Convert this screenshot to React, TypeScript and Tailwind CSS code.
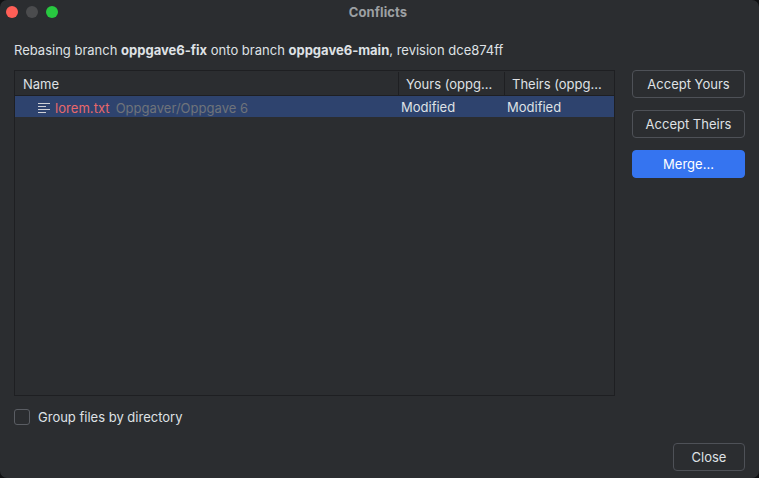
import React from 'react';

function PushButton({ label, primary = false, className = '' }: { label: string; primary?: boolean; className?: string }) {
  return (
    <button
      className={`flex h-7 items-center justify-center rounded-[4px] border ${
        primary ? 'border-[#3574f0] bg-[#3574f0] text-white' : 'border-[#4e5157] text-[#dfe1e5]'
      } ${className}`}
    >
      {label}
    </button>
  );
}

function TextFileIcon() {
  return (
    <svg width="13" height="12" viewBox="0 0 13 12" stroke="#ced0d6" strokeWidth="1" className="shrink-0">
      <path d="M0 1.5H12M0 4.5H8M0 7.5H12M0 10.5H8" />
    </svg>
  );
}

export default function App() {
  return (
    <div className="h-[478px] w-[759px] bg-[#101113]">
      <div className="flex h-full w-full flex-col overflow-hidden rounded-[7px] bg-[#2b2d30] font-['Inter','Liberation_Sans',sans-serif] text-[13px] leading-4 text-[#dfe1e5]">
        <header className="grid h-6 shrink-0 grid-cols-3 items-center">
          <div className="flex gap-2 pl-1.5">
            <span className="size-3 rounded-full bg-[#ff5f57]" />
            <span className="size-3 rounded-full bg-[#4b4c4e]" />
            <span className="size-3 rounded-full bg-[#28c840]" />
          </div>
          <h1 className="pr-[3px] text-center font-bold tracking-[0.1px] text-[#9da0a3]">Conflicts</h1>
        </header>
        <p className="mt-[18px] ml-[14px] whitespace-nowrap">
          Rebasing branch <b>oppgave6-fix</b> onto branch <b>oppgave6-main</b>, revision dce874ff
        </p>
        <main className="mt-3 mr-[14px] ml-[14px] flex justify-between">
          <section className="h-[326px] w-[601px] border border-[#1e1f22]">
            <div className="flex h-[25px] items-center border-b border-[#1e1f22]">
              <div className="w-[383px] pt-px pl-2">Name</div>
              <div className="h-[23px] w-[106px] border-l border-[#1e1f22] pt-1 pl-[7px]">Yours (oppg...</div>
              <div className="h-[23px] grow border-l border-[#1e1f22] pt-1 pl-[7px]">Theirs (oppg...</div>
            </div>
            <div className="flex h-[21px] bg-[#2e436e]">
              <div className="flex w-[386px] items-center pt-[3px] pl-[23px]">
                <TextFileIcon />
                <span className="ml-1 tracking-[0.05px] text-[#e8686a]">lorem.txt</span>
                <span className="ml-1.5 tracking-[0.03px] text-[#6f737a]">Oppgaver/Oppgave 6</span>
              </div>
              <div className="w-[106px] pt-[3px]">Modified</div>
              <div className="pt-[3px]">Modified</div>
            </div>
          </section>
          <aside className="flex w-[113px] flex-col gap-3">
            <PushButton label="Accept Yours" />
            <PushButton label="Accept Theirs" />
            <PushButton label="Merge..." primary />
          </aside>
        </main>
        <label className="mt-[13px] ml-[14px] flex h-4 items-center gap-2">
          <span className="size-4 rounded-[3px] border border-[#5a5d63]" />
          <span>Group files by directory</span>
        </label>
        <footer className="mt-[18px] flex justify-end pr-[14px]">
          <PushButton label="Close" className="w-[72px]" />
        </footer>
      </div>
    </div>
  );
}
